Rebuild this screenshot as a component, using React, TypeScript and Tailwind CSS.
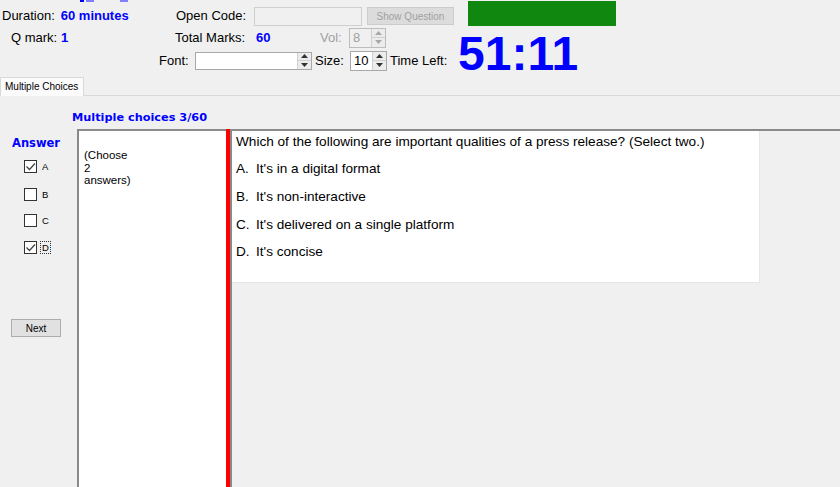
import React from "react";

const Arrow = ({ up, color }: { up: boolean; color: string }) => (
  <svg width="7" height="4" viewBox="0 0 7 4">
    <path d={up ? "M0 4 L3.5 0 L7 4Z" : "M0 0 L3.5 4 L7 0Z"} fill={color} />
  </svg>
);

const Spin = ({ disabled }: { disabled?: boolean }) => {
  const c = disabled ? "#a8a8a8" : "#333";
  return (
    <div className="flex flex-col w-[14px] h-full border-l border-[#d0d0d0]">
      <div className="flex-1 flex items-center justify-center bg-[#ececec] border-b border-[#d0d0d0]">
        <Arrow up color={c} />
      </div>
      <div className="flex-1 flex items-center justify-center bg-[#ececec]">
        <Arrow up={false} color={c} />
      </div>
    </div>
  );
};

const Check = ({ checked, label, focus }: { checked?: boolean; label: string; focus?: boolean }) => (
  <div className="flex items-center h-[13px]">
    <div className="w-[13px] h-[13px] bg-white border border-[#333] flex items-center justify-center">
      {checked && (
        <svg width="11" height="11" viewBox="0 0 11 11">
          <path d="M1.5 5.5 L4.5 8.5 L10 2.5" stroke="#444" strokeWidth="1.3" fill="none" />
        </svg>
      )}
    </div>
    <span
      className={
        "ml-[3px] text-[9.5px] leading-[11px] px-[1px] " +
        (focus ? "border border-dotted border-[#333]" : "border border-transparent")
      }
    >
      {label}
    </span>
  </div>
);

export default function App() {
  return (
    <div className="relative w-[840px] h-[487px] overflow-hidden bg-[#f0f0f0] text-black font-['Liberation_Sans',Arial,sans-serif] flex flex-col">
      {/* cut-off fragments at the very top */}
      <div className="absolute top-0 left-[80px] w-[4px] h-[2px] bg-[#0000ff]" />
      <div className="absolute top-0 left-[86px] w-[8px] h-[2px] bg-[#8080ff]" />
      <div className="absolute top-0 left-[120px] w-[8px] h-[2px] bg-[#8080ff]" />

      {/* Row 1 */}
      <div className="flex h-[27px] items-start">
        <div className="w-[176px] flex mt-[8px] text-[13px] leading-[16px]">
          <span className="ml-[2px]">Duration:</span>
          <span className="ml-[6px] font-bold text-[#0000ff]">60 minutes</span>
        </div>
        <span className="w-[78px] mt-[8px] text-[13px] leading-[16px]">Open Code:</span>
        <div className="w-[108px] h-[19px] mt-[7px] border border-[#cfcfcf] bg-[#f0f0f0]" />
        <div className="ml-[5px] w-[87px] h-[18px] mt-[7px] bg-[#dcdcdc] border border-[#cccccc] flex items-center justify-center text-[10px] text-[#a0a0a0]">
          Show Question
        </div>
        <div className="ml-[14px] w-[148px] h-[25px] mt-[1px] bg-[#108810]" />
      </div>

      {/* Rows 2-3 with timer */}
      <div className="flex h-[50px]">
        <div className="w-[458px] flex flex-col">
          <div className="flex items-center h-[21px] text-[13px] leading-[16px]">
            <span className="ml-[11px] w-[50px]">Q mark:</span>
            <span className="font-bold text-[#0000ff] w-[114px]">1</span>
            <span className="w-[81px]">Total Marks:</span>
            <span className="font-bold text-[#0000ff] w-[64px]">60</span>
            <span className="w-[29px] text-[#a0a0a0]">Vol:</span>
            <div className="w-[37px] h-[20px] border border-[#bcbcbc] flex bg-[#f0f0f0]">
              <span className="flex-1 pl-[3px] text-[#a0a0a0] leading-[18px]">8</span>
              <Spin disabled />
            </div>
          </div>
          <div className="flex items-center h-[21px] mt-[2px] text-[13px] leading-[16px]">
            <span className="ml-[159px] w-[36px]">Font:</span>
            <div className="w-[117px] h-[18px] border border-[#a8a8a8] bg-white flex">
              <span className="flex-1" />
              <Spin />
            </div>
            <span className="ml-[3px] w-[35px]">Size:</span>
            <div className="w-[37px] h-[20px] border border-[#a8a8a8] bg-white flex">
              <span className="flex-1 pl-[3px] leading-[18px]">10</span>
              <Spin />
            </div>
            <span className="ml-[3px]">Time Left:</span>
          </div>
        </div>
        <div className="mt-[3px] text-[48px] leading-[48px] font-bold text-[#0000ff]">51:11</div>
      </div>

      {/* Tab */}
      <div className="flex h-[19px] border-b border-[#d9d9d9]">
        <div className="w-[84px] h-[19px] bg-[#fbfbfb] border border-b-0 border-[#d9d9d9] text-[10px] leading-[17px] pl-[4px]">
          Multiple Choices
        </div>
      </div>

      {/* Panel */}
      <div className="flex-1 flex flex-col">
        <div className="h-[33px] pl-[72px] pt-[15px] text-[11.3px] leading-[14px] font-bold text-[#0000ff] font-['DejaVu_Sans',sans-serif]">
          Multiple choices 3/60
        </div>
        <div className="flex-1 flex">
          <div className="w-[77px] flex flex-col">
            <div className="mt-[7px] pl-[12px] text-[11.5px] leading-[14px] font-bold text-[#0000ff] font-['DejaVu_Sans',sans-serif]">
              Answer
            </div>
            <div className="pl-[24px] flex flex-col">
              <div className="mt-[10px]">
                <Check checked label="A" />
              </div>
              <div className="mt-[15px]">
                <Check label="B" />
              </div>
              <div className="mt-[13px]">
                <Check label="C" />
              </div>
              <div className="mt-[14px]">
                <Check checked label="D" focus />
              </div>
            </div>
            <div className="mt-[65px] ml-[11px] w-[50px] h-[18px] bg-[#e1e1e1] border border-[#adadad] flex items-center justify-center text-[10px]">
              Next
            </div>
          </div>
          <div className="w-[149px] bg-white border-t-2 border-l-2 border-[#8a8a8a] pl-[5px] pt-[18px] text-[11.5px] leading-[12.5px]">
            (Choose
            <br />2
            <br />
            answers)
          </div>
          <div className="w-[4px] bg-[#ff0000]" />
          <div className="flex-1 border-t-2 border-l-2 border-[#8a8a8a] flex flex-col">
            <div className="w-[528px] h-[152px] bg-white border-r border-b border-[#e6e6e6] pl-[4px] pt-[3px] text-[13.6px] leading-[16px]">
              <div>Which of the following are important qualities of a press release? (Select two.)</div>
              <div className="mt-[11px] flex">
                <span className="w-[20px]">A.</span>
                <span>It's in a digital format</span>
              </div>
              <div className="mt-[12px] flex">
                <span className="w-[20px]">B.</span>
                <span>It's non-interactive</span>
              </div>
              <div className="mt-[12px] flex">
                <span className="w-[20px]">C.</span>
                <span>It's delivered on a single platform</span>
              </div>
              <div className="mt-[11px] flex">
                <span className="w-[20px]">D.</span>
                <span>It's concise</span>
              </div>
            </div>
          </div>
        </div>
      </div>
    </div>
  );
}
